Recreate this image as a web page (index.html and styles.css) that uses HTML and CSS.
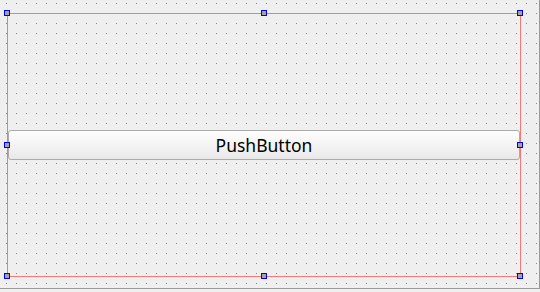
FILE: index.html
```html
<!DOCTYPE html>
<html>
<head>
<meta charset="utf-8">
<link rel="stylesheet" href="styles.css">
</head>
<body>
<div class="form">
  <div class="layout">
    <button class="push">PushButton</button>
    <span class="handle h-tl"></span>
    <span class="handle h-tm"></span>
    <span class="handle h-tr"></span>
    <span class="handle h-ml"></span>
    <span class="handle h-mr"></span>
    <span class="handle h-bl"></span>
    <span class="handle h-bm"></span>
    <span class="handle h-br"></span>
  </div>
</div>
</body>
</html>
```
FILE: styles.css
```css
html, body {
  margin: 0;
  padding: 0;
  background: #efefef;
  width: 540px;
  height: 292px;
  overflow: hidden;
}
.form {
  width: 532px;
  height: 275px;
  border-right: 1px solid #9a9a9a;
  border-bottom: 1px solid #9a9a9a;
  background-color: #efefef;
  background-image:
    linear-gradient(to right, #efefef 6px, transparent 6px, transparent 7px, #efefef 7px),
    linear-gradient(to bottom, transparent 3px, #8a8a8a 3px, #8a8a8a 4px, transparent 4px);
  background-size: 10px 10px, 10px 10px;
  padding-top: 13px;
  padding-left: 7px;
  box-sizing: content-box;
}
.layout {
  position: relative;
  width: 512px;
  height: 262px;
  border: 1px solid #f47878;
  display: flex;
  align-items: center;
}
.push {
  width: 512px;
  height: 30px;
  margin: 0;
  padding: 0;
  box-sizing: border-box;
  border: 1px solid #ababab;
  border-radius: 3px;
  background: linear-gradient(to bottom, #fefefe, #e9e9e9);
  font-family: "Noto Sans", "DejaVu Sans", sans-serif;
  font-size: 17.5px;
  color: #000;
  line-height: 28px;
}
.handle {
  position: absolute;
  width: 6px;
  height: 6px;
  box-sizing: border-box;
  border: 1px solid #0000f0;
  background: #a3a3a3;
}
.h-tl { left: -4px; top: -4px; }
.h-tm { left: calc(50% - 3px); top: -4px; }
.h-tr { right: -3px; top: -4px; }
.h-ml { left: -4px; top: calc(50% - 3px); }
.h-mr { right: -3px; top: calc(50% - 3px); }
.h-bl { left: -4px; bottom: -3px; }
.h-bm { left: calc(50% - 3px); bottom: -3px; }
.h-br { right: -3px; bottom: -3px; }
```
